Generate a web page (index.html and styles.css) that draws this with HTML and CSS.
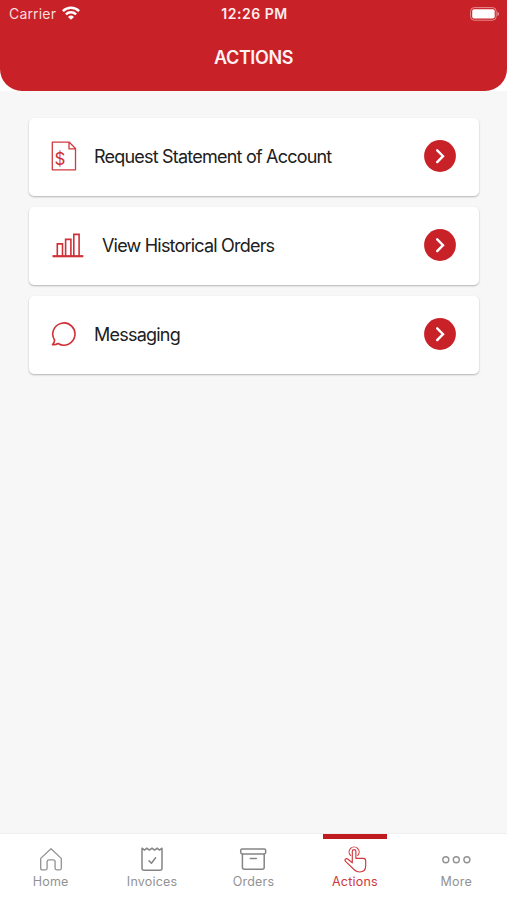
FILE: index.html
```html
<!DOCTYPE html>
<html lang="en">
<head>
<meta charset="utf-8">
<title>Actions</title>
<link rel="stylesheet" href="styles.css">
</head>
<body>
<div class="app">
  <div class="top">
    <header class="header">
      <div class="status">
        <div class="carrier"><span>Carrier</span>
          <svg class="wifi" width="18" height="14" viewBox="0 0 18 14" fill="none" stroke="#fff" stroke-width="2.5"><path d="M.9 5.1a11.600 11.600 0 0 1 16.200 0M3.900 8.300a7.400 7.400 0 0 1 10.200 0"/><path d="M9 13.800 6 10.900a4.400 4.400 0 0 1 6 0z" fill="#fff" stroke="none"/></svg>
        </div>
        <div class="time">12:26 PM</div>
        <svg class="battery" width="30" height="14" viewBox="0 0 30 14"><rect x=".6" y=".6" width="25.600" height="12.600" rx="3.600" fill="none" stroke="#e48d90"/><rect x="2.200" y="2.200" width="22.500" height="9.400" rx="1.800" fill="#fff"/><path d="M27.400 4.700c2.200.7 2.200 3.700 0 4.400z" fill="#e48d90"/></svg>
      </div>
      <h1 class="title">ACTIONS</h1>
    </header>
  </div>
  <main class="list">
    <a class="card">
      <svg class="icon" width="26" height="32" viewBox="0 0 26 32" fill="none" stroke="#cf3b40" stroke-width="1.300"><path d="M1.300 2.200h17l6.200 6.300v21.300H1.300zM18 2.200v6.600h6.500" stroke-linejoin="round"/><text class="dollar" x="3.600" y="25.200">$</text></svg>
      <span class="label label-request">Request Statement of Account</span>
      <svg class="go" width="32" height="32" viewBox="0 0 32 32" fill="none"><circle cx="16" cy="16" r="15.900" fill="#c82128"/><path d="m13.200 10.300 5.800 5.900-5.800 5.900" stroke="#fff" stroke-width="2.400" stroke-linecap="round"/></svg>
    </a>
    <a class="card">
      <svg class="icon icon-wide" width="32" height="32" viewBox="0 0 32 32" fill="none" stroke="#cf3137" stroke-width="1.600"><path d="M5.300 27V14.900h5.200V27M13.600 27V10.400h5.300V27M21.800 27V5.400h5.300V27"/><path d="M.5 27.200h30.800" stroke-width="2.200"/></svg>
      <span class="label label-history">View Historical Orders</span>
      <svg class="go" width="32" height="32" viewBox="0 0 32 32" fill="none"><circle cx="16" cy="16" r="15.900" fill="#c82128"/><path d="m13.200 10.300 5.800 5.900-5.800 5.900" stroke="#fff" stroke-width="2.400" stroke-linecap="round"/></svg>
    </a>
    <a class="card">
      <svg class="icon" width="26" height="32" viewBox="0 0 26 32" fill="none" stroke="#cf3137" stroke-width="1.600" stroke-linejoin="round"><path d="M3.600 22.100a11.100 11.100 0 1 1 3.500 3.400c-1.500.9-3.500 1.400-5.600 1.100 1.100-.9 2-2.700 2.100-4.500z"/></svg>
      <span class="label label-message">Messaging</span>
      <svg class="go" width="32" height="32" viewBox="0 0 32 32" fill="none"><circle cx="16" cy="16" r="15.900" fill="#c82128"/><path d="m13.200 10.300 5.800 5.900-5.800 5.900" stroke="#fff" stroke-width="2.400" stroke-linecap="round"/></svg>
    </a>
  </main>
  <nav class="tabs">
    <a class="tab">
      <svg width="26" height="28" viewBox="0 0 26 28" fill="none" stroke="#929292" stroke-width="1.300" stroke-linejoin="round"><path d="M2.700 12.400 13 2.700l10.300 9.700v9.900q0 1.500-1.500 1.500h-3.200q-1.500 0-1.500-1.500v-6.500q0-2-2-2h-4q-2 0-2 2v6.500q0 1.500-1.500 1.500H4.200q-1.500 0-1.500-1.500z"/></svg>
      <span>Home</span>
    </a>
    <a class="tab">
      <svg width="26" height="28" viewBox="0 0 26 28" fill="none" stroke="#858585" stroke-width="1.500" stroke-linecap="round" stroke-linejoin="round"><path d="M3 2.200v20q0 2 2 2h16q2 0 2-2v-20l-2.500 1.900-2.400-1.900-2.500 1.900L13 2.200l-2.600 1.900-2.500-1.900-2.400 1.900zM10 14.800l2.400 2.400 4.200-5.400"/></svg>
      <span>Invoices</span>
    </a>
    <a class="tab">
      <svg width="28" height="28" viewBox="0 0 28 28" fill="none" stroke="#858585" stroke-width="1.500" stroke-linecap="round"><rect x="1.700" y="2.900" width="25" height="5" rx="1.600"/><path d="M3.400 8v13.200q0 2 2 2h17.800q2 0 2-2V8M11.300 12.400h6"/></svg>
      <span>Orders</span>
    </a>
    <a class="tab active">
      <svg width="26" height="28" viewBox="0 0 26 28" fill="none" stroke="#cf373c" stroke-width="1.150" stroke-linecap="round" stroke-linejoin="round"><path d="M10.300 16.800V5.400a1.800 1.800 0 0 1 3.600 0v6.900h7.300q2.500 0 2.500 2.500v5c0 4-2.500 6.200-6 6.200-2.200 0-3.700-.6-5.200-2l-8.700-8.300c-2-2.100.2-4 2.200-2.500l4.300 3.600M8.400 9.400a5 5 0 1 1 7.400 0"/></svg>
      <span>Actions</span>
    </a>
    <a class="tab">
      <svg width="30" height="28" viewBox="0 0 30 28" fill="none" stroke="#929292" stroke-width="1.400"><circle cx="4.800" cy="13.700" r="3"/><circle cx="15.300" cy="13.700" r="3"/><circle cx="25.900" cy="13.700" r="3"/></svg>
      <span>More</span>
    </a>
  </nav>
</div>
</body>
</html>
```
FILE: styles.css
```css
* { box-sizing: border-box; }
body { margin: 0; font-family: Inter, "Liberation Sans", sans-serif; }
.app { display: flex; flex-direction: column; height: 900px; background: #f7f7f7; overflow: hidden; }
.top { flex: none; height: 91px; background: #fff; }
.header { height: 91px; background: #c82128; border-radius: 0 0 22px 22px; color: #fff; }
.status { display: grid; grid-template-columns: 1fr auto 1fr; align-items: center; height: 27px; padding: 0 7px 0 9px; font-size: 14px; line-height: 27px; }
.carrier { display: flex; align-items: center; gap: 6px; color: #f9dddd; letter-spacing: .17px; }
.wifi { margin-top: -1px; }
.time { font-weight: 600; letter-spacing: .5px; color: #ffecec; }
.battery { justify-self: end; }
.title { margin: 0; height: 62px; text-align: center; font-size: 18px; font-weight: 600; line-height: 62px; letter-spacing: -.4px; color: #fff2f2; }
.list { flex: 1; display: flex; flex-direction: column; gap: 11px; padding: 27px 28px 0 29px; }
.card { display: flex; align-items: center; height: 78px; padding: 0 23px 2px 22px; background: #fff; border-radius: 5px; box-shadow: 0 1px 2px rgba(0, 0, 0, .28); color: #202020; }
.icon { margin-right: 17px; flex: none; }
.icon-wide { margin: 0 18px 0 1px; }
.label { flex: 1; font-size: 18px; white-space: nowrap; }
.label-request { letter-spacing: -.79px; }
.label-history { letter-spacing: -.8px; }
.label-message { letter-spacing: -.78px; }
.dollar { font: 17px Inter, sans-serif; fill: #cf3137; stroke: none; }
.go { flex: none; }
.tabs { flex: none; display: grid; grid-template-columns: repeat(5, 1fr); height: 67px; background: #fff; border-top: 1px solid #efefef; }
.tab { display: flex; flex-direction: column; align-items: center; padding-top: 12px; font-size: 12.500px; line-height: 15px; color: #929292; letter-spacing: .2px; }
.tab.active { color: #cf373c; background: linear-gradient(#c11b22, #c11b22) center top / 64px 5px no-repeat; }
```
